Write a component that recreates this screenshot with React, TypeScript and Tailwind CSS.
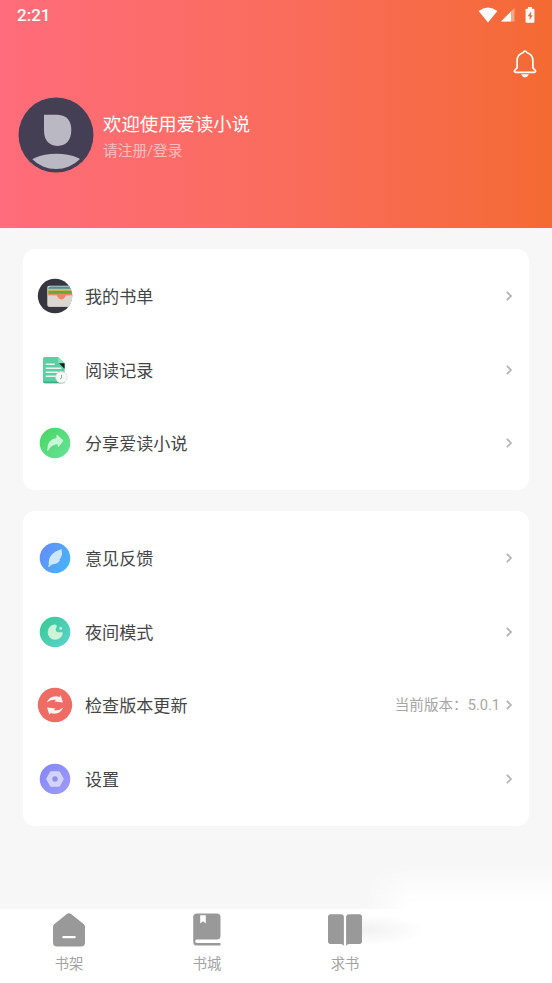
import React from 'react';

interface MenuItem {
  label: string;
  icon: React.ReactNode;
  extra?: string;
}

const BookListIcon = () => (
  <svg viewBox="0 0 36 36" className="w-9 h-9">
    <defs>
      <clipPath id="listClip">
        <circle cx="18" cy="18" r="17.2" />
      </clipPath>
    </defs>
    <g clipPath="url(#listClip)">
      <rect width="36" height="36" fill="#36363f" />
      <rect x="10.3" y="7.8" width="26" height="21" rx="2" fill="#e3ded9" />
      <path d="M11.2 10.6q0-2 2-2H36v3H11.2z" fill="#3f94a0" />
      <path d="M11.2 10.8H36v2.4H11.2z" fill="#e8b866" />
      <path d="M11.2 12.8H36v3.4H11.2z" fill="#62a844" />
      <path d="M11.2 15.8H36v2H11.2z" fill="#f58463" />
      <path d="M11.2 17.4H36v11H11.2z" fill="#dcd6d1" />
      <path d="M19.4 16.5h10l-1.2 2.6q-1.2 2.4-3.8 2.5-2.6-.1-3.8-2.5z" fill="#f58463" />
    </g>
  </svg>
);

const HistoryIcon = () => (
  <svg viewBox="0 0 36 36" className="w-9 h-9">
    <path d="M7.8 5h13.4l6.4 6.3V31.2H7.8q-1.8 0-1.8-1.8V6.8Q6 5 7.8 5z" fill="#5bcea4" />
    <path d="M6 29.5h20v1.7H7.8q-1.8 0-1.8-1.7z" fill="#3fae88" />
    <path d="M21.2 5l6.4 6.3h-5q-1.4 0-1.4-1.4z" fill="#8ce0c2" />
    <path d="M22 11.3h5.6v5.4z" fill="#10201c" />
    <path d="M9.2 12.3h8M9.2 16.3h14.5M9.2 20.2h12M9.2 24.2h9.5" stroke="#e2f8ef" strokeWidth="1.5" strokeLinecap="round" />
    <circle cx="24.4" cy="25.3" r="5.7" fill="#f8f9f9" stroke="#d2ddd9" strokeWidth=".7" />
    <path d="M24.6 22.8v3.2l-1.6 1" fill="none" stroke="#8ea59d" strokeWidth="1" />
  </svg>
);

const ShareIcon = () => (
  <svg viewBox="0 0 36 36" className="w-9 h-9">
    <defs>
      <linearGradient id="shareBg" x1="0" y1="0" x2="1" y2="1">
        <stop offset="0" stopColor="#48d65f" />
        <stop offset="1" stopColor="#68e29d" />
      </linearGradient>
    </defs>
    <circle cx="18" cy="18" r="15.3" fill="url(#shareBg)" />
    <path d="M19.4 10.4q.2-1 1.1-.4l5.4 4.9q.7.6.2 1.4l-4.3 5.4q-.8.7-1-.3l-.2-2.2q-4.6.2-7.4 3.6l-1.9 2.7q-1 .7-1.1-.6.3-10.7 9.2-11.9z" fill="#c8f7d6" />
  </svg>
);

const FeedbackIcon = () => (
  <svg viewBox="0 0 36 36" className="w-9 h-9">
    <defs>
      <linearGradient id="feedBg" x1="0" y1="0.2" x2="1" y2="0.8">
        <stop offset="0" stopColor="#658cfb" />
        <stop offset="1" stopColor="#45b6fd" />
      </linearGradient>
    </defs>
    <circle cx="18" cy="18" r="15.3" fill="url(#feedBg)" />
    <path d="M24.6 9q1.2 5-.6 8.6-.5 1-1.7 1.8l.8.5q-1.6 3.5-6.4 4.2l-2.6.9-2 2.1q-1.4-.3-.8-1.7l.6-1q-.9-5.6 2.6-9.5 3.6-3.8 10.1-5.9z" fill="#cce8ff" />
  </svg>
);

const NightIcon = () => (
  <svg viewBox="0 0 36 36" className="w-9 h-9">
    <defs>
      <linearGradient id="nightBg" x1="0" y1="0" x2="1" y2="1">
        <stop offset="0" stopColor="#38c894" />
        <stop offset="1" stopColor="#5cd4d0" />
      </linearGradient>
    </defs>
    <circle cx="18" cy="18" r="15.3" fill="url(#nightBg)" />
    <path d="M17.6 10.6a7.6 7.6 0 1 0 8.2 8.6q0-.9-.9-.9h-3.7q-2.5-.2-2.5-2.3 0-1.5 1-3.2.6-2-2.1-2.2z" fill="#cbf5d6" />
    <circle cx="23.7" cy="14.4" r="1.4" fill="#cbf5d6" />
  </svg>
);

const UpdateIcon = () => (
  <svg viewBox="0 0 36 36" className="w-9 h-9">
    <circle cx="18" cy="18" r="17.2" fill="#ef6c65" />
    <path d="M9.6 15.4q3-6.2 9-6.2 2 0 3.6.8l1.5-1.7 2.3 7.1-8.5-.9 1.6-1.5q-4.6-1.3-9.5 2.4z" fill="#fff1ee" />
    <path d="M26.4 20.6q-3 6.2-9 6.2-2 0-3.6-.8l-1.5 1.7L10 20.6l8.5.9-1.6 1.5q4.6 1.3 9.5-2.4z" fill="#fff1ee" />
  </svg>
);

const SettingsIcon = () => (
  <svg viewBox="0 0 36 36" className="w-9 h-9">
    <defs>
      <linearGradient id="setBg" x1="0" y1="0" x2="1" y2="1">
        <stop offset="0" stopColor="#8387f2" />
        <stop offset="1" stopColor="#a19bfd" />
      </linearGradient>
    </defs>
    <circle cx="18" cy="18" r="15.3" fill="url(#setBg)" />
    <path d="M14.2 11.6h7.6l3.5 6.4-3.5 6.4h-7.6L10.7 18z" fill="#d2d4ff" stroke="#d2d4ff" strokeWidth="2.8" strokeLinejoin="round" />
    <circle cx="18" cy="18" r="2.7" fill="#8f8ee9" />
  </svg>
);

const libraryItems: MenuItem[] = [
  { label: '我的书单', icon: <BookListIcon /> },
  { label: '阅读记录', icon: <HistoryIcon /> },
  { label: '分享爱读小说', icon: <ShareIcon /> },
];

const systemItems: MenuItem[] = [
  { label: '意见反馈', icon: <FeedbackIcon /> },
  { label: '夜间模式', icon: <NightIcon /> },
  { label: '检查版本更新', icon: <UpdateIcon />, extra: '当前版本：5.0.1' },
  { label: '设置', icon: <SettingsIcon /> },
];

const MenuCard: React.FC<{ items: MenuItem[] }> = ({ items }) => (
  <div className="bg-white rounded-xl py-[10px]">
    {items.map((item) => (
      <div key={item.label} className="flex items-center h-[73.7px] pl-[14px] pr-[15px]">
        {item.icon}
        <span className="ml-3 pt-[2px] text-[17.1px] leading-6 text-[#454548]">{item.label}</span>
        {item.extra && <span className="ml-auto pb-px text-[14.6px] leading-5 text-[#a6a6a6]">{item.extra}</span>}
        <svg viewBox="0 0 10 12" className={`w-[10px] h-3 ${item.extra ? 'ml-1' : 'ml-auto'}`}>
          <path d="M2.8 1.8L7 6l-4.2 4.2" fill="none" stroke="#b3b3b3" strokeWidth="1.7" />
        </svg>
      </div>
    ))}
  </div>
);

const StatusBar = () => (
  <div className="flex items-center justify-between h-[30px] pl-[17px] pr-[17.5px]">
    <span className="font-[Roboto] font-medium text-[17px] leading-5">2:21</span>
    <div className="flex items-center">
      <svg viewBox="0 0 20 16" className="w-5 h-4">
        <path d="M.6 4Q10-3.2 19.4 4L10 15.5z" fill="#fff" />
      </svg>
      <svg viewBox="0 0 14 14" className="ml-[2.5px] w-[14px] h-[14px]">
        <path d="M0 13.5L13.5 0v13.5z" fill="#fff" fillOpacity=".4" />
        <path d="M0 13.5L10 3.5v10z" fill="#fff" />
      </svg>
      <svg viewBox="0 0 10 16" className="ml-[10px] w-[10px] h-4">
        <path d="M3 0h4v1.8h1.4q1 0 1 1v12q0 1-1 1H1.6q-1 0-1-1v-12q0-1 1-1H3z" fill="#fff" />
        <path d="M6.2 4.3L2.6 9.3h2v4l3.2-5.1H5.9z" fill="#f56c3a" />
      </svg>
    </div>
  </div>
);

const Avatar = () => (
  <svg viewBox="0 0 76 76" className="w-[76px] h-[76px]">
    <defs>
      <clipPath id="avatarClip">
        <circle cx="38" cy="38" r="34" />
      </clipPath>
    </defs>
    <circle cx="38" cy="38" r="37.5" fill="#443f54" />
    <path d="M26 17.7h13.5q13.8 1 13.8 15.3Q53 48.4 39.5 49 26 48.2 26 33z" fill="#bab8c2" />
    <ellipse cx="38.4" cy="70" rx="30" ry="13.2" fill="#bab8c2" clipPath="url(#avatarClip)" />
  </svg>
);

const tabs = [
  {
    label: '书架',
    icon: (
      <svg viewBox="0 0 36 36" className="w-9 h-9">
        <path d="M15.9 2.1q2.1-1.6 4.2 0L32.6 12q1.4 1.1 1.4 2.8v15.7q0 4-4 4H6q-4 0-4-4V14.8Q2 13.1 3.4 12z" fill="#999" />
        <path d="M12.3 25.2h11.4" stroke="#fff" strokeWidth="2.2" strokeLinecap="round" />
      </svg>
    ),
  },
  {
    label: '书城',
    icon: (
      <svg viewBox="0 0 36 36" className="w-9 h-9">
        <path d="M8 1.5h20q3.5 0 3.5 3.5v19q0 3.5-3.5 3.5H7.8q-1.6 0-1.6 1.7 0 1.8 1.8 1.8h23.5v2.6H8.3q-4.1 0-4.1-4.2V5Q4.2 1.5 8 1.5z" fill="#999" />
        <path d="M11.2 3.3h5.6v8.3L14 9.2l-2.8 2.4z" fill="#fff" />
      </svg>
    ),
  },
  {
    label: '求书',
    icon: (
      <svg viewBox="0 0 36 36" className="w-9 h-9">
        <path d="M3.6 2.2h10.3q2.6.1 3 2.2v29.3q-1.2-1.8-3.3-1.8h-10q-2.6 0-2.6-2.6V4.8q0-2.6 2.6-2.6z" fill="#999" />
        <path d="M22.1 2.2h10.3q2.6 0 2.6 2.6v24.5q0 2.6-2.6 2.6h-10q-2.1 0-3.3 1.8V4.4q.4-2.1 3-2.2z" fill="#999" />
      </svg>
    ),
  },
];

const App: React.FC = () => {
  return (
    <div className="relative flex flex-col w-[552px] h-[983px] overflow-hidden bg-[#f7f7f7] font-['Roboto','Noto_Sans_CJK_SC',sans-serif]">
      <header className="h-[228px] shrink-0 text-white bg-linear-to-r from-[#ff6c7b] via-[#fa6c5d] to-[#f46a31]">
        <StatusBar />
        <div className="flex justify-end h-[67px] pt-[19px] pr-[14px]">
          <svg viewBox="0 0 26 30" className="w-[26px] h-[30px]">
            <path d="M13 2q1.2 0 1.7 1.5 6.2 2 6.2 8.3v7l2.5 2.7q.6 1.8-1.2 1.8H3.8q-1.8 0-1.2-1.8l2.5-2.7v-7q0-6.3 6.2-8.3Q11.8 2 13 2z" fill="none" stroke="#fff" strokeWidth="1.7" strokeLinejoin="round" />
            <path d="M9.2 25.2h7.6q-1.2 3.1-3.8 3.1t-3.8-3.1z" fill="#fff" />
          </svg>
        </div>
        <div className="flex items-center h-[76px] pl-[17.5px]">
          <Avatar />
          <div className="ml-[9.5px] pt-[6px]">
            <div className="text-[18.4px] leading-[26px]">欢迎使用爱读小说</div>
            <div className="text-[14.7px] leading-[26px] text-white/55">请注册/登录</div>
          </div>
        </div>
      </header>

      <main className="flex flex-col flex-1 gap-[21px] px-[23px] pt-[21.2px]">
        <MenuCard items={libraryItems} />
        <MenuCard items={systemItems} />
      </main>

      <nav className="grid grid-cols-4 h-[74px] shrink-0 bg-white">
        {tabs.map((tab) => (
          <div key={tab.label} className="flex flex-col items-center pt-[3px]">
            {tab.icon}
            <span className="mt-[6px] text-[14.3px] leading-5 text-[#a3a3a3]">{tab.label}</span>
          </div>
        ))}
      </nav>

      <div className="absolute right-0 bottom-[74px] w-[190px] h-[48px] bg-linear-to-b from-white/0 via-white/70 via-60% to-white mask-l-from-75% mask-l-to-100%" />
      <div className="absolute left-[362px] top-[914px] w-[64px] h-[32px] bg-radial-[ellipse_at_left] from-[#f1f1f1] to-white to-70%" />
    </div>
  );
};

export default App;
